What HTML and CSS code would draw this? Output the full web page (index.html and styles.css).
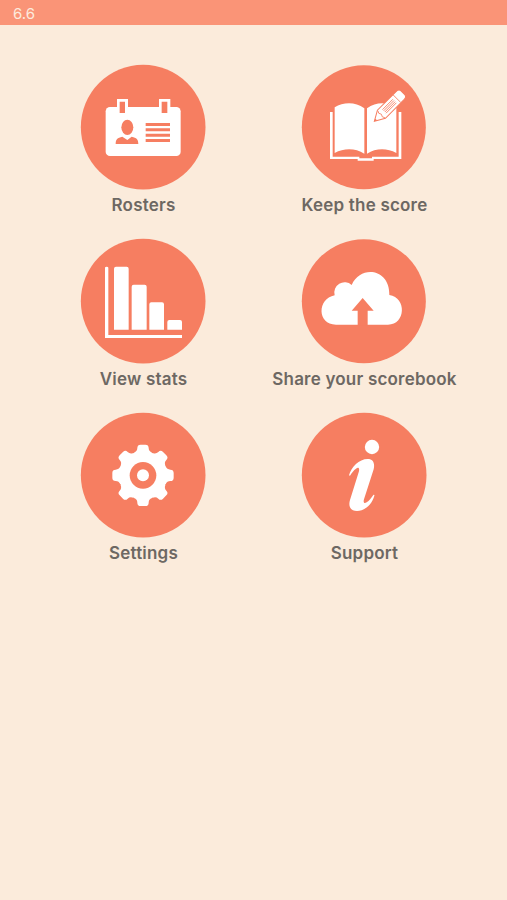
FILE: index.html
```html
<!DOCTYPE html>
<html lang="en">
<head>
    <meta charset="UTF-8">
    <meta name="viewport" content="width=device-width, initial-scale=1.0">
    <title>Scorebook</title>
    <link rel="stylesheet" href="styles.css">
</head>
<body>
    <header class="top-bar">6.6</header>
    <main class="menu">
        <a class="item">
            <svg class="icon" viewBox="15 12 378 378">
                <circle class="disc" cx="204.5" cy="201.5" r="187"/>
                <rect x="92" y="141" width="225" height="147" rx="13"/>
                <path d="M126 117h33v30h-33zM252 117h34v30h-34z"/>
                <path class="cut" d="M134 125h16v34h-16zM260 125h17v34h-17z"/>
                <ellipse class="cut" cx="157" cy="202" rx="18" ry="23"/>
                <path class="cut" d="M122 252c0-14 5-19 20-22l15 10 13-10c15 3 20 8 20 22z"/>
                <path class="cut" d="M212 189h73v9h-73zM212 205h73v9h-73zM212 221h73v9h-73zM212 237h73v9h-73z"/>
            </svg>
            <span class="label">Rosters</span>
        </a>
        <a class="item">
            <svg class="icon" viewBox="15 12 378 378">
                <circle class="disc" cx="203.5" cy="201.5" r="186"/>
                <path d="M116 142c26-16 61-18 89 3v136c-27-17-61-17-89-2z"/>
                <path d="M301 142c-26-16-60-18-88 3v136c27-17 60-17 88-2z"/>
                <path d="M102 156h8v134h80v5h38v-5h80V156h8v141h-83v5h-48v-5h-83z"/>
                <!-- pencil -->
                <g transform="translate(235 184) rotate(-45)">
                    <path class="pencil" d="M0 0l30-17h79q12 0 12 9v16q0 9-12 9H30z"/>
                    <path class="cut" d="M0 0l8-4.500v9z"/>
                    <path class="line" d="M30-15q-7 7 0 15-7 7 0 15M96-16v32M42-7.500h44M42-2.500h44M42 2.500h44M42 7.500h44"/>
                </g>
            </svg>
            <span class="label">Keep the score</span>
        </a>
        <a class="item">
            <svg class="icon" viewBox="15 12 378 378">
                <circle class="disc" cx="204.5" cy="201.5" r="187"/>
                <path d="M90 101q0-3 5-3t5 3v202h221v9H90z"/>
                <path d="M117 287V104q0-6 6-6h32q6 0 6 6v183zM170 287V158q0-6 6-6h33q6 0 6 6v129zM223 287v-76q0-6 6-6h32q6 0 6 6v76zM277 287v-23q0-6 6-6h32q6 0 6 6v23z"/>
            </svg>
            <span class="label">View stats</span>
        </a>
        <a class="item">
            <svg class="icon" viewBox="105 12 378 378">
                <circle class="disc" cx="293.5" cy="201.5" r="186"/>
                <path d="M210 272c-57 0-57-78-4-88a31 31 0 0 1 51-31c28-62 115-48 113 30 53 8 49 89-4 89z"/>
                <path class="cut" d="M290 192l33 38h-18v44h-30v-44h-18z"/>
            </svg>
            <span class="label">Share your scorebook</span>
        </a>
        <a class="item">
            <svg class="icon" viewBox="15 12 378 378">
                <defs>
                    <path id="tooth" d="M177 134q10-4 10-14 0-10 10-10h14q10 0 10 10 0 10 10 14v16h-54z"/>
                </defs>
                <circle class="disc" cx="204.5" cy="201.5" r="187"/>
                <circle cx="204" cy="202" r="72"/>
                <use href="#tooth"/>
                <use href="#tooth" transform="rotate(45 204 202)"/>
                <use href="#tooth" transform="rotate(90 204 202)"/>
                <use href="#tooth" transform="rotate(135 204 202)"/>
                <use href="#tooth" transform="rotate(180 204 202)"/>
                <use href="#tooth" transform="rotate(225 204 202)"/>
                <use href="#tooth" transform="rotate(270 204 202)"/>
                <use href="#tooth" transform="rotate(315 204 202)"/>
                <circle class="cut" cx="204" cy="202" r="40"/>
                <circle cx="204" cy="202" r="18"/>
            </svg>
            <span class="label">Settings</span>
        </a>
        <a class="item">
            <svg class="icon" viewBox="15 12 378 378">
                <circle class="disc" cx="204.5" cy="201.5" r="187"/>
                <circle cx="228" cy="117" r="21.5"/>
                <path d="M159 202c7-25 30-49 56-49 17 0 22 13 18 31l-29 90c-3 10 1 14 8 9 8-5 13-12 20-22 2-2 4-1 3 2-6 24-28 46-52 46-19 0-27-13-21-33l26-83c4-13-1-17-8-11-7 5-12 11-18 21z"/>
            </svg>
            <span class="label">Support</span>
        </a>
    </main>
</body>
</html>
```

FILE: styles.css
```css
*{
    margin: 0;
    padding: 0;
    box-sizing: border-box;
}
body{
    min-height: 100vh;
    background: #fbebdb;
    font-family: Inter, "Liberation Sans", sans-serif;
}
.top-bar{
    height: 25px;
    padding-left: 13px;
    background: #fa9477;
    color: #fdeadd;
    font-size: 15px;
    line-height: 27px;
}
.menu{
    display: grid;
    grid-template-columns: 221px 221px;
    grid-auto-rows: 174px;
    justify-content: center;
    padding-top: 39px;
}
.item{
    display: flex;
    flex-direction: column;
    align-items: center;
}
.icon{
    width: 126px;
    height: 126px;
    fill: #fff;
}
.disc,
.cut{
    fill: #f67e61;
}
.pencil{
    stroke: #f67e61;
    stroke-width: 3;
}
.line{
    fill: none;
    stroke: #f67e61;
    stroke-width: 2.5;
}
.label{
    padding-left: 1px;
    color: #6d6863;
    font-size: 17px;
    font-weight: 600;
    letter-spacing: 0.2px;
    line-height: 30px;
    white-space: nowrap;
}
```
